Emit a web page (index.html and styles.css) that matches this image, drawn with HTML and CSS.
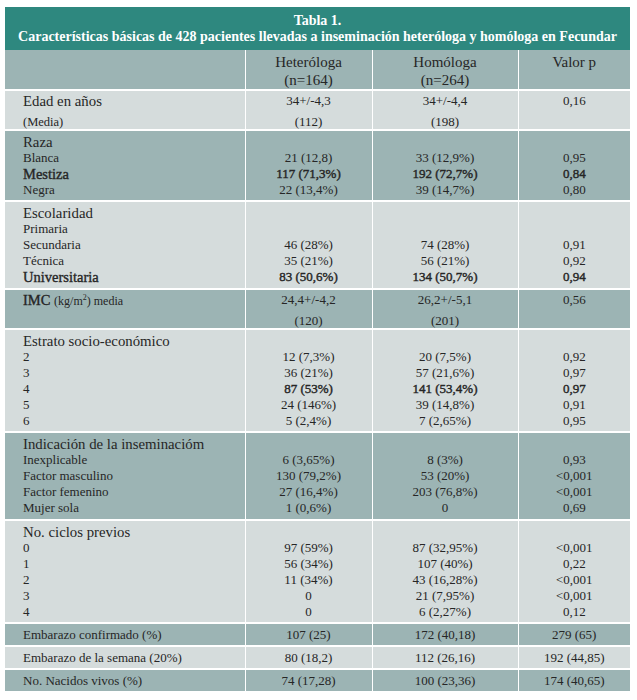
FILE: index.html
```html
<!DOCTYPE html>
<html lang="es">
<head>
<meta charset="utf-8">
<title>Tabla 1</title>
<link rel="stylesheet" href="styles.css">
</head>
<body>
<div class="wrap">
  <div class="title">
    <div>Tabla 1.</div>
    <div>Características básicas de 428 pacientes llevadas a inseminación heteróloga y homóloga en Fecundar</div>
  </div>
  <table class="tbl">
    <colgroup>
      <col class="c1"><col class="c2"><col class="c3"><col class="c4">
    </colgroup>
    <tr class="head dark">
      <td></td>
      <td><div>Heteróloga</div><div>(n=164)</div></td>
      <td><div>Homóloga</div><div>(n=264)</div></td>
      <td><div>Valor p</div></td>
    </tr>
    <tr class="pair light">
      <td><div class="h">Edad en años</div><div class="s p2">(Media)</div></td>
      <td><div class="v">34+/-4,3</div><div class="v p2">(112)</div></td>
      <td><div class="v">34+/-4,4</div><div class="v p2">(198)</div></td>
      <td><div class="v">0,16</div></td>
    </tr>
    <tr class="grp dark">
      <td><div class="h">Raza</div><div class="s">Blanca</div><div class="hb">Mestiza</div><div class="s">Negra</div></td>
      <td><div class="v"></div><div class="v">21 (12,8)</div><div class="v b">117 (71,3%)</div><div class="v">22 (13,4%)</div></td>
      <td><div class="v"></div><div class="v">33 (12,9%)</div><div class="v b">192 (72,7%)</div><div class="v">39 (14,7%)</div></td>
      <td><div class="v"></div><div class="v">0,95</div><div class="v b">0,84</div><div class="v">0,80</div></td>
    </tr>
    <tr class="grp g5 light">
      <td><div class="h">Escolaridad</div><div class="s">Primaria</div><div class="s">Secundaria</div><div class="s">Técnica</div><div class="hb">Universitaria</div></td>
      <td><div class="v"></div><div class="v"></div><div class="v">46 (28%)</div><div class="v">35 (21%)</div><div class="v b">83 (50,6%)</div></td>
      <td><div class="v"></div><div class="v"></div><div class="v">74 (28%)</div><div class="v">56 (21%)</div><div class="v b">134 (50,7%)</div></td>
      <td><div class="v"></div><div class="v"></div><div class="v">0,91</div><div class="v">0,92</div><div class="v b">0,94</div></td>
    </tr>
    <tr class="pair imc dark">
      <td><div class="h"><span class="hb2">IMC</span> <span class="sm">(kg/m<sup>2</sup>) media</span></div></td>
      <td><div class="v">24,4+/-4,2</div><div class="v p2">(120)</div></td>
      <td><div class="v">26,2+/-5,1</div><div class="v p2">(201)</div></td>
      <td><div class="v">0,56</div></td>
    </tr>
    <tr class="grp light">
      <td><div class="h">Estrato socio-económico</div><div class="s">2</div><div class="s">3</div><div class="s">4</div><div class="s">5</div><div class="s">6</div></td>
      <td><div class="v"></div><div class="v">12 (7,3%)</div><div class="v">36 (21%)</div><div class="v b">87 (53%)</div><div class="v">24 (146%)</div><div class="v">5 (2,4%)</div></td>
      <td><div class="v"></div><div class="v">20 (7,5%)</div><div class="v">57 (21,6%)</div><div class="v b">141 (53,4%)</div><div class="v">39 (14,8%)</div><div class="v">7 (2,65%)</div></td>
      <td><div class="v"></div><div class="v">0,92</div><div class="v">0,97</div><div class="v b">0,97</div><div class="v">0,91</div><div class="v">0,95</div></td>
    </tr>
    <tr class="grp g5 dark">
      <td><div class="h">Indicación de la inseminacióm</div><div class="s">Inexplicable</div><div class="s">Factor masculino</div><div class="s">Factor femenino</div><div class="s">Mujer sola</div></td>
      <td><div class="v"></div><div class="v">6 (3,65%)</div><div class="v">130 (79,2%)</div><div class="v">27 (16,4%)</div><div class="v">1 (0,6%)</div></td>
      <td><div class="v"></div><div class="v">8 (3%)</div><div class="v">53 (20%)</div><div class="v">203 (76,8%)</div><div class="v">0</div></td>
      <td><div class="v"></div><div class="v">0,93</div><div class="v">&lt;0,001</div><div class="v">&lt;0,001</div><div class="v">0,69</div></td>
    </tr>
    <tr class="grp light">
      <td><div class="h">No. ciclos previos</div><div class="s">0</div><div class="s">1</div><div class="s">2</div><div class="s">3</div><div class="s">4</div></td>
      <td><div class="v"></div><div class="v">97 (59%)</div><div class="v">56 (34%)</div><div class="v">11 (34%)</div><div class="v">0</div><div class="v">0</div></td>
      <td><div class="v"></div><div class="v">87 (32,95%)</div><div class="v">107 (40%)</div><div class="v">43 (16,28%)</div><div class="v">21 (7,95%)</div><div class="v">6 (2,27%)</div></td>
      <td><div class="v"></div><div class="v">&lt;0,001</div><div class="v">0,22</div><div class="v">&lt;0,001</div><div class="v">&lt;0,001</div><div class="v">0,12</div></td>
    </tr>
    <tr class="one dark">
      <td><div class="s">Embarazo confirmado (%)</div></td>
      <td><div class="v">107 (25)</div></td>
      <td><div class="v">172 (40,18)</div></td>
      <td><div class="v">279 (65)</div></td>
    </tr>
    <tr class="one light">
      <td><div class="s">Embarazo de la semana (20%)</div></td>
      <td><div class="v">80 (18,2)</div></td>
      <td><div class="v">112 (26,16)</div></td>
      <td><div class="v">192 (44,85)</div></td>
    </tr>
    <tr class="one dark">
      <td><div class="s">No. Nacidos vivos (%)</div></td>
      <td><div class="v">74 (17,28)</div></td>
      <td><div class="v">100 (23,36)</div></td>
      <td><div class="v">174 (40,65)</div></td>
    </tr>
  </table>
</div>
</body>
</html>
```

FILE: styles.css
```css
html, body {
  margin: 0;
  padding: 0;
  background: #ffffff;
}
body {
  font-family: "Liberation Serif", "Times New Roman", serif;
  color: #262626;
}
.wrap {
  width: 625px;
  margin: 7px 0 0 5px;
}
.title {
  background: #2e887f;
  color: #ffffff;
  font-weight: bold;
  font-size: 14px;
  line-height: 16px;
  text-align: center;
  height: 43px;
  box-sizing: border-box;
  padding-top: 6px;
}
.tbl {
  width: 625px;
  table-layout: fixed;
  border-collapse: collapse;
}
.c1 { width: 240px; }
.c2 { width: 127px; }
.c3 { width: 146px; }
.c4 { width: 112px; }
.tbl td {
  padding: 0;
  vertical-align: top;
  border-left: 1px solid #ffffff;
}
.tbl td:first-child {
  border-left: none;
  padding-left: 18px;
}
.tbl tr + tr td {
  border-top: 2px solid #ffffff;
}
.dark { background: #9cb4b4; }
.light { background: #d5dcdc; }

.head td {
  height: 38px;
  padding-top: 3px;
  font-size: 15px;
  line-height: 18px;
  text-align: center;
  box-sizing: border-box;
}
.grp td {
  padding-top: 3px;
  padding-bottom: 2px;
}
.grp.g5 td {
  padding-bottom: 3px;
}
.one td {
  padding-top: 3px;
  padding-bottom: 2px;
}
.pair td {
  height: 40px;
  padding-top: 3px;
  box-sizing: border-box;
}
.pair.imc td {
  height: 39px;
}
.pair .h, .pair .v { height: 14px; line-height: 14px; }
.pair .p2 { margin-top: 7px; }

.h, .s, .hb, .v {
  height: 16px;
  line-height: 16px;
  white-space: nowrap;
}
.h { font-size: 14.8px; }
.hb { font-size: 14.5px; -webkit-text-stroke: 0.35px #262626; }
.hb2 { font-size: 14.5px; -webkit-text-stroke: 0.35px #262626; }
.s { font-size: 13px; }
.sm { font-size: 12px; }
.sm sup { font-size: 8px; line-height: 0; vertical-align: 5px; }
.v {
  font-size: 13px;
  text-align: center;
}
.v.b { -webkit-text-stroke: 0.4px #262626; }
.pair td:first-child .p2 { font-size: 12.5px; height: 14px; line-height: 14px; }
```
